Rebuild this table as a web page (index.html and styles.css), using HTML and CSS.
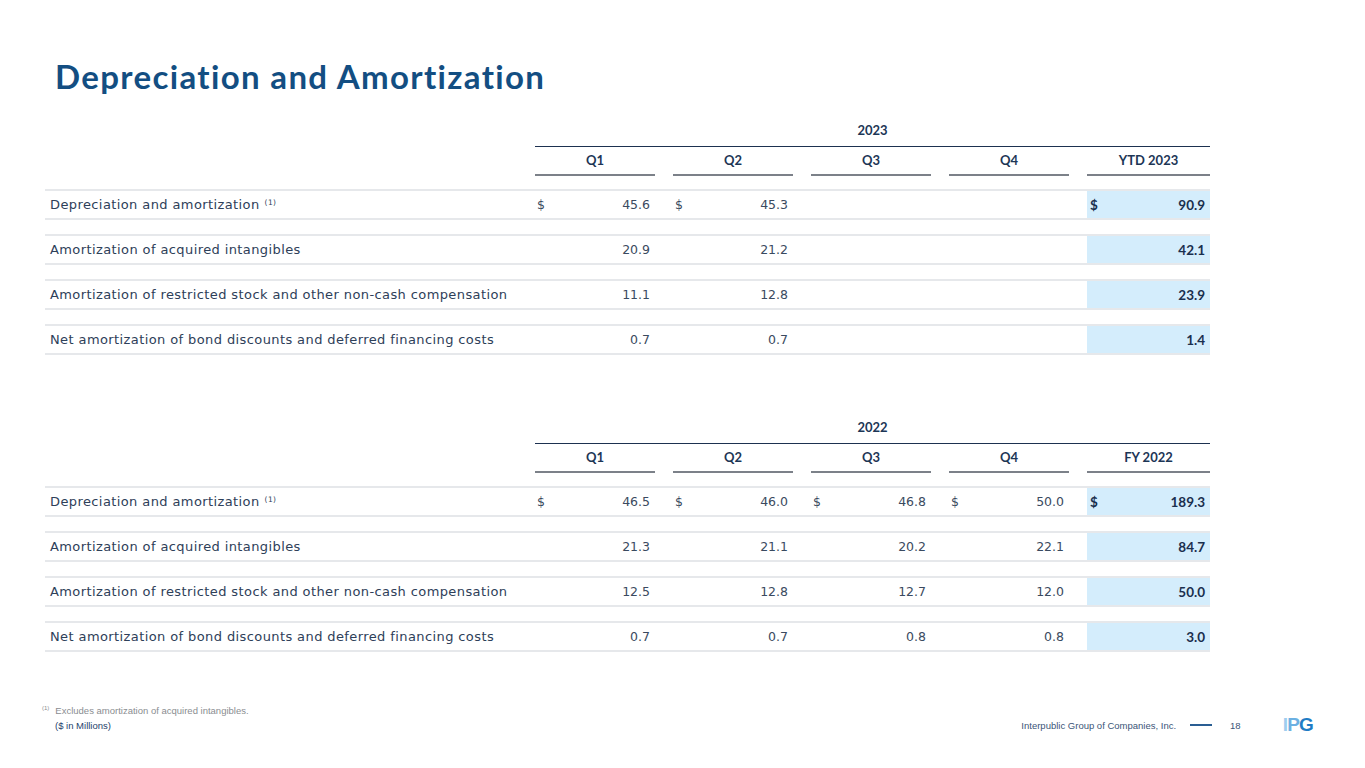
FILE: index.html
```html
<!DOCTYPE html>
<html>
<head>
<meta charset="utf-8">
<link rel="stylesheet" href="styles.css">
</head>
<body>
<div class="page">
  <h1 class="title">Depreciation and Amortization</h1>

  <section class="fin-table">
    <div class="year-row"><div class="year">2023</div></div>
    <div class="grid q-row">
      <div></div>
      <div class="qh">Q1</div><div class="qh">Q2</div><div class="qh">Q3</div><div class="qh">Q4</div><div class="qh">YTD 2023</div>
    </div>
    <div class="grid data-row">
      <div class="label">Depreciation and amortization <sup>(1)</sup></div>
      <div class="cell dol"><span>$</span><span>45.6</span></div>
      <div class="cell dol"><span>$</span><span>45.3</span></div>
      <div class="cell"></div>
      <div class="cell"></div>
      <div class="cell dol total"><span>$</span><span>90.9</span></div>
    </div>
    <div class="grid data-row">
      <div class="label">Amortization of acquired intangibles</div>
      <div class="cell">20.9</div>
      <div class="cell">21.2</div>
      <div class="cell"></div>
      <div class="cell"></div>
      <div class="cell total">42.1</div>
    </div>
    <div class="grid data-row">
      <div class="label">Amortization of restricted stock and other non-cash compensation</div>
      <div class="cell">11.1</div>
      <div class="cell">12.8</div>
      <div class="cell"></div>
      <div class="cell"></div>
      <div class="cell total">23.9</div>
    </div>
    <div class="grid data-row">
      <div class="label">Net amortization of bond discounts and deferred financing costs</div>
      <div class="cell">0.7</div>
      <div class="cell">0.7</div>
      <div class="cell"></div>
      <div class="cell"></div>
      <div class="cell total">1.4</div>
    </div>
  </section>

  <section class="fin-table second">
    <div class="year-row"><div class="year">2022</div></div>
    <div class="grid q-row">
      <div></div>
      <div class="qh">Q1</div><div class="qh">Q2</div><div class="qh">Q3</div><div class="qh">Q4</div><div class="qh">FY 2022</div>
    </div>
    <div class="grid data-row">
      <div class="label">Depreciation and amortization <sup>(1)</sup></div>
      <div class="cell dol"><span>$</span><span>46.5</span></div>
      <div class="cell dol"><span>$</span><span>46.0</span></div>
      <div class="cell dol"><span>$</span><span>46.8</span></div>
      <div class="cell dol"><span>$</span><span>50.0</span></div>
      <div class="cell dol total"><span>$</span><span>189.3</span></div>
    </div>
    <div class="grid data-row">
      <div class="label">Amortization of acquired intangibles</div>
      <div class="cell">21.3</div>
      <div class="cell">21.1</div>
      <div class="cell">20.2</div>
      <div class="cell">22.1</div>
      <div class="cell total">84.7</div>
    </div>
    <div class="grid data-row">
      <div class="label">Amortization of restricted stock and other non-cash compensation</div>
      <div class="cell">12.5</div>
      <div class="cell">12.8</div>
      <div class="cell">12.7</div>
      <div class="cell">12.0</div>
      <div class="cell total">50.0</div>
    </div>
    <div class="grid data-row">
      <div class="label">Net amortization of bond discounts and deferred financing costs</div>
      <div class="cell">0.7</div>
      <div class="cell">0.7</div>
      <div class="cell">0.8</div>
      <div class="cell">0.8</div>
      <div class="cell total">3.0</div>
    </div>
  </section>

  <footer class="footer">
    <div class="footnote"><sup>(1)</sup>Excludes amortization of acquired intangibles.</div>
    <div class="footer-bar">
      <div class="units">($ in Millions)</div>
      <div class="brand">
        <span class="company">Interpublic Group of Companies, Inc.</span>
        <span class="dash"></span>
        <span class="pnum">18</span>
        <span class="logo"><span class="l-i">I</span><span class="l-p">P</span><span class="l-g">G</span></span>
      </div>
    </div>
  </footer>
</div>
</body>
</html>
```

FILE: styles.css
```css
html, body {
  margin: 0;
  padding: 0;
  background: #ffffff;
}

.page {
  width: 1365px;
  height: 768px;
  padding-top: 56px;
  box-sizing: border-box;
  font-family: "Lato", "Open Sans", sans-serif;
  font-variant-ligatures: none;
  overflow: hidden;
}

.title {
  margin: 0 0 0 55px;
  font-family: "Lato", sans-serif;
  font-weight: 700;
  font-size: 33px;
  line-height: 40px;
  color: #134e82;
  letter-spacing: 1.35px;
}

.fin-table {
  margin: 24px 0 0 45px;
  width: 1165px;
}

.fin-table.second {
  margin-top: 62px;
}

.grid {
  display: grid;
  grid-template-columns: 472px 120px 120px 120px 120px 123px;
  column-gap: 18px;
}

.year-row {
  margin-left: 490px;
  border-bottom: 1px solid #1d3150;
  padding-bottom: 6px;
}

.year {
  text-align: center;
  font-weight: 700;
  font-size: 13px;
  line-height: 20px;
  color: #1d3656;
}

.q-row {
  margin-bottom: 13px;
}

.qh {
  text-align: center;
  font-weight: 700;
  font-size: 13px;
  line-height: 20px;
  color: #1d3656;
  padding-top: 3px;
  padding-bottom: 4px;
  border-bottom: 2px solid #7c8189;
}

.data-row {
  border-top: 2px solid #e6e8eb;
  border-bottom: 2px solid #e6e8eb;
  height: 31px;
  box-sizing: border-box;
  margin-bottom: 14px;
  align-items: stretch;
}

.label {
  padding-left: 5px;
  font-family: "DejaVu Sans", sans-serif;
  font-size: 13px;
  letter-spacing: 0.4px;
  color: #2e4059;
  display: flex;
  align-items: center;
  white-space: nowrap;
}

.label sup {
  font-size: 7.5px;
  margin-left: 5px;
  position: relative;
  top: -2px;
}

.cell {
  font-family: "DejaVu Sans", sans-serif;
  font-size: 12.5px;
  color: #3a4a60;
  display: flex;
  align-items: center;
  justify-content: flex-end;
  padding: 0 5px 0 2px;
}

.cell.dol {
  justify-content: space-between;
}

.cell.total {
  background: #d4edfc;
  font-family: "Lato", sans-serif;
  font-size: 13.5px;
  font-weight: 700;
  color: #1a2f4e;
  padding-left: 3px;
}

.footer {
  margin-top: 50px;
  font-family: "Liberation Sans", Arial, sans-serif;
  font-size: 9.5px;
}

.footnote {
  margin-left: 42px;
  color: #8a8d91;
  line-height: 13px;
}

.footnote sup {
  font-size: 6px;
  margin-right: 6px;
  vertical-align: 4px;
}

.footer-bar {
  display: flex;
  justify-content: space-between;
  align-items: center;
  padding-left: 55px;
  height: 16px;
}

.units {
  color: #1d3f6b;
}

.brand {
  display: flex;
  align-items: center;
  color: #3b5578;
  margin-right: 52px;
}

.dash {
  width: 22px;
  height: 1.5px;
  background: #2a5e93;
  margin: 0 18px 0 14px;
}

.pnum {
  margin-right: 42px;
}

.logo {
  font-family: "Liberation Sans", Arial, sans-serif;
  font-weight: 700;
  font-size: 19px;
  line-height: 16px;
  letter-spacing: -0.8px;
}

.l-i { color: #9fcdef; }
.l-p { color: #6cb0e2; }
.l-g { color: #1f7cc5; }
```
